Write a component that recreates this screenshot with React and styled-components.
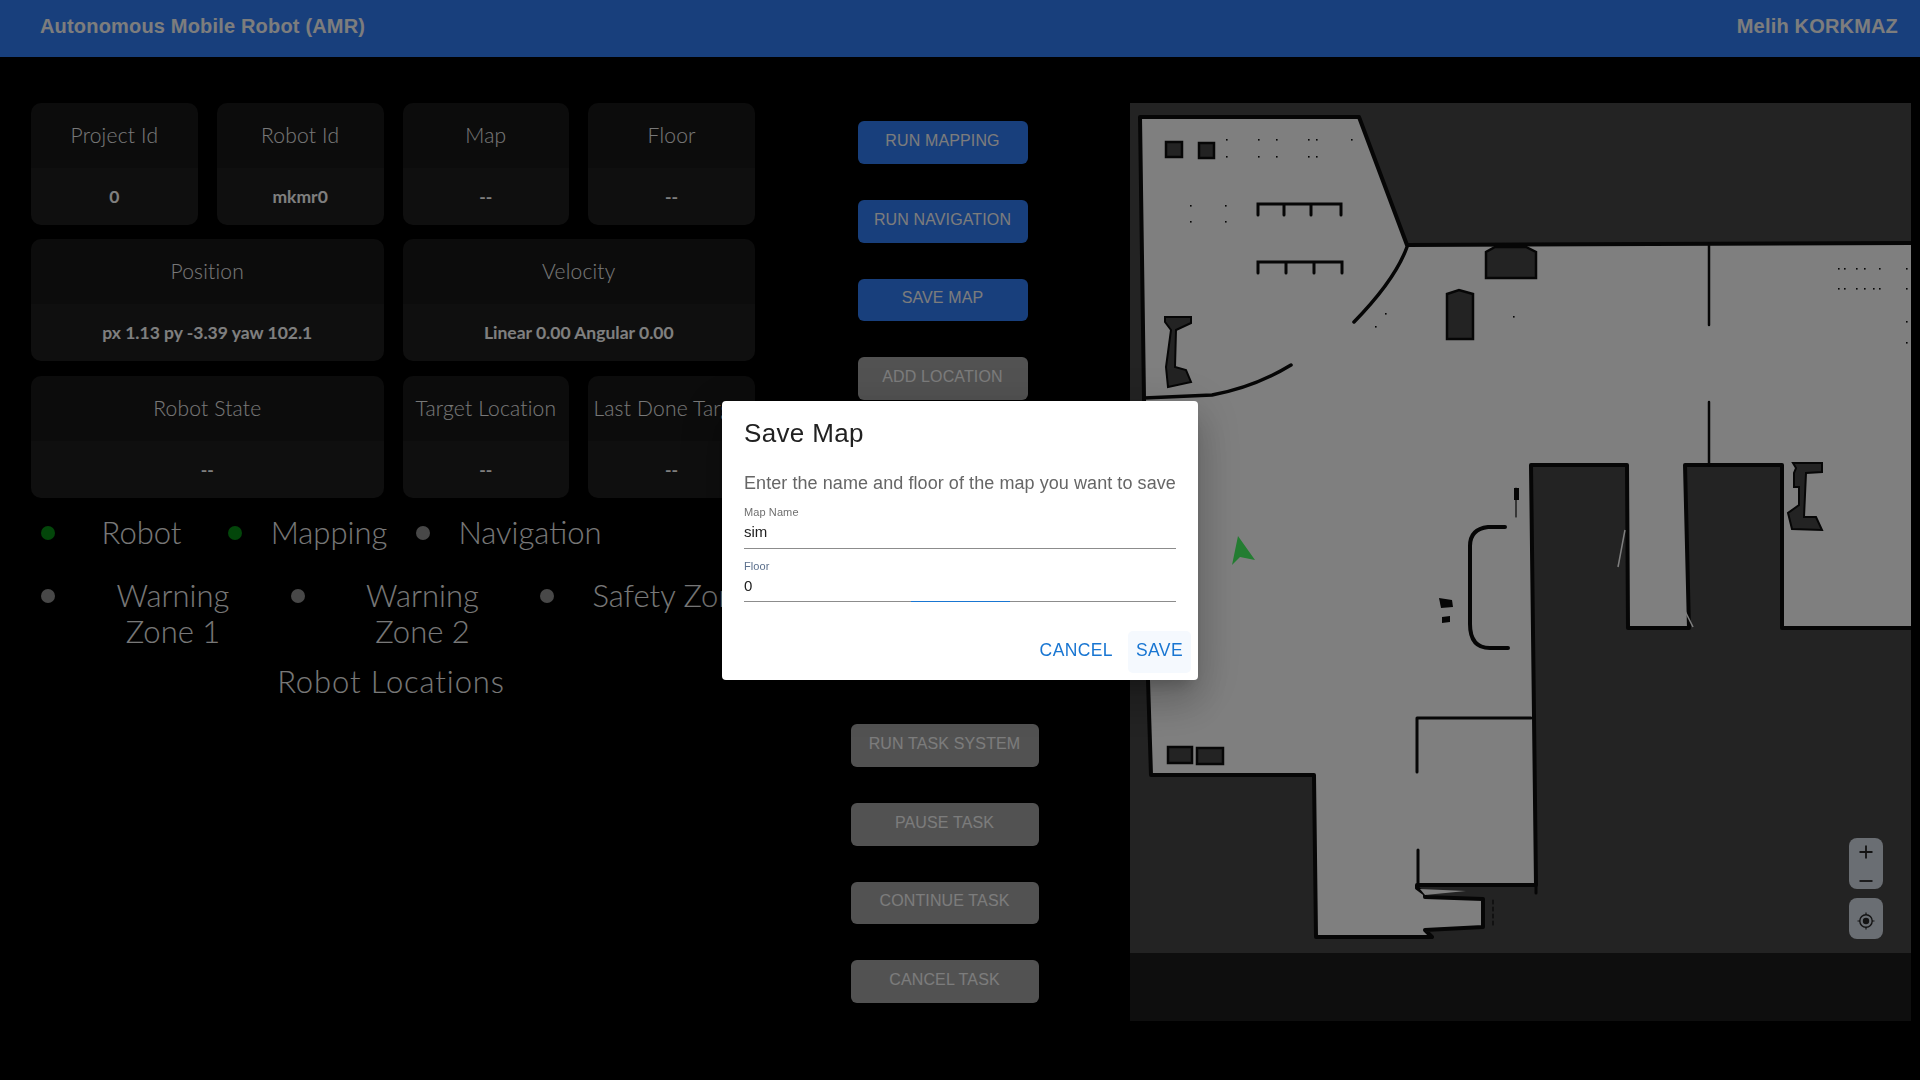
import React from 'react';
import styled, { createGlobalStyle } from 'styled-components';

const GlobalStyle = createGlobalStyle`
    html, body {
        margin: 0;
        height: 100%;
        background: #000;
        font-family: 'Liberation Sans', Arial, sans-serif;
    }
    * { box-sizing: border-box; }
`;

const Page = styled.div`
    width: 1920px;
    height: 1080px;
    overflow: hidden;
    background: #000;
`;

const Header = styled.header`
    height: 57px;
    padding: 14px 22px 0 40px;
    display: flex;
    justify-content: space-between;
    background: #307ef8;
    color: #fafafa;
    font-size: 20px;
    line-height: 24px;
    font-weight: 700;
    letter-spacing: .18px;
`;

const Main = styled.main`
    display: flex;
    padding: 46px 9px 0 31px;
`;

const LeftColumn = styled.section`
    width: 724px;
    flex: none;
`;

const CardGrid = styled.div`
    display: grid;
    grid-template-columns: repeat(4, 1fr);
    grid-auto-rows: 122px;
    column-gap: 19px;
    row-gap: 14.4px;
`;

const Card = styled.div`
    grid-column: span ${(p) => p.$span || 1};
    display: flex;
    flex-direction: column;
    border-radius: 10px;
    overflow: hidden;
    text-align: center;
    white-space: nowrap;
`;

const CardTitle = styled.div`
    height: 65px;
    flex: none;
    padding-top: 17px;
    background: #181818;
    color: #f0f0f0;
    font-family: Lato, sans-serif;
    font-weight: 300;
    font-size: 21px;
    letter-spacing: .2px;
    line-height: 30px;
`;

const CardValue = styled.div`
    flex: 1;
    padding-top: 17px;
    background: #1e1e1e;
    color: #ffffff;
    font-family: Lato, sans-serif;
    font-weight: 700;
    font-size: 17.5px;
    line-height: 24px;
`;

const LegendRow = styled.div`
    display: flex;
    padding-left: 10px;
    margin-top: ${(p) => p.$top}px;
`;

const LegendItem = styled.div`
    width: ${(p) => p.$width}px;
    flex: none;
    display: flex;
`;

const Dot = styled.span`
    width: 14px;
    height: 14px;
    flex: none;
    margin-top: 12px;
    border-radius: 50%;
    background: ${(p) => (p.$on ? '#068c14' : '#909090')};
`;

const LegendText = styled.div`
    flex: 1;
    text-align: center;
    white-space: nowrap;
    color: #f0f0f0;
    font-family: Lato, sans-serif;
    font-weight: 300;
    font-size: 31px;
    line-height: 36px;
`;

const SectionTitle = styled(LegendText)`
    margin-top: 14px;
    padding-right: 4px;
    letter-spacing: .9px;
`;

const Controls = styled.section`
    width: 375px;
    flex: none;
    display: flex;
    flex-direction: column;
    align-items: center;
    padding-top: 18px;
`;

const ButtonGroup = styled.div`
    display: flex;
    flex-direction: column;
    gap: 36px;
    margin-top: ${(p) => p.$top || 0}px;
    margin-left: ${(p) => p.$left || 0}px;
`;

const ActionButton = styled.button`
    width: ${(p) => p.$width}px;
    height: 42.75px;
    padding: 0 0 3px;
    border: 0;
    border-radius: 6px;
    background: ${(p) => (p.$active ? '#307ef8' : '#a5a5a5')};
    color: #f8f8f8;
    font-family: 'Liberation Sans', Arial, sans-serif;
    font-size: 16px;
    letter-spacing: .13px;
    text-transform: uppercase;
`;

const MapPanel = styled.section`
    position: relative;
    width: 781px;
    height: 918px;
    flex: none;
    background: #1c1c1c;
`;

const MapDrawing = styled.svg`
    display: block;
    width: 781px;
    height: 850px;
    background: #464646;
`;

const MapTools = styled.div`
    position: absolute;
    right: 28px;
    bottom: 82px;
    display: flex;
    flex-direction: column;
    gap: 9px;
`;

const ZoomBox = styled.div`
    width: 34px;
    height: 51px;
    padding: 7px 0 1px;
    display: flex;
    flex-direction: column;
    align-items: center;
    gap: 15px;
    border-radius: 8px;
    background: #d4dce6;
`;

const LocateBox = styled.div`
    width: 34px;
    height: 41px;
    padding-top: 5px;
    display: flex;
    align-items: center;
    justify-content: center;
    border-radius: 8px;
    background: #d4dce6;
`;

const Backdrop = styled.div`
    position: fixed;
    inset: 0;
    display: flex;
    align-items: center;
    justify-content: center;
    background: rgba(0, 0, 0, .5);
`;

const Dialog = styled.div`
    width: 476px;
    height: 279px;
    display: flex;
    flex-direction: column;
    padding: 15px 22px 0;
    border-radius: 4px;
    background: #fff;
    box-shadow: 0 11px 15px -7px rgba(0,0,0,.2), 0 24px 38px 3px rgba(0,0,0,.14), 0 9px 46px 8px rgba(0,0,0,.12);
`;

const DialogTitle = styled.h2`
    margin: 0;
    color: #212121;
    font-size: 26px;
    line-height: 34px;
    font-weight: 400;
    letter-spacing: .35px;
`;

const DialogText = styled.p`
    margin: 21px 0 0;
    color: #666;
    font-size: 18px;
    line-height: 24px;
    letter-spacing: .07px;
    white-space: nowrap;
`;

const Field = styled.div`
    position: relative;
    height: ${(p) => p.$height}px;
    margin-top: ${(p) => p.$top}px;
    border-bottom: 1px solid #8c8c8c;
`;

const FieldLabel = styled.div`
    color: ${(p) => p.$color};
    font-size: 11px;
    letter-spacing: .1px;
    line-height: 14px;
`;

const FieldValue = styled.div`
    margin-top: 2px;
    color: #212121;
    font-size: 15px;
    line-height: 22px;
`;

const FocusLine = styled.span`
    position: absolute;
    left: 167px;
    bottom: -1px;
    width: 99px;
    height: 1px;
    background: #1976d2;
`;

const DialogActions = styled.div`
    display: flex;
    justify-content: flex-end;
    margin: 29px -15px 0 0;
`;

const TextButton = styled.div`
    height: 42px;
    padding: 0 ${(p) => p.$pad}px 3px;
    display: flex;
    align-items: center;
    border-radius: 5px;
    background: ${(p) => (p.$hover ? '#f5f9fe' : 'transparent')};
    color: #1976d2;
    font-size: 17.5px;
    letter-spacing: .4px;
`;

const topCards = [
    { title: 'Project Id', value: '0' },
    { title: 'Robot Id', value: 'mkmr0' },
    { title: 'Map', value: '--' },
    { title: 'Floor', value: '--' },
    { title: 'Position', value: 'px 1.13 py -3.39 yaw 102.1', span: 2 },
    { title: 'Velocity', value: 'Linear 0.00 Angular 0.00', span: 2 },
    { title: 'Robot State', value: '--', span: 2 },
    { title: 'Target Location', value: '--' },
    { title: 'Last Done Target', value: '--' }
];

const upperButtons = ['Run Mapping', 'Run Navigation', 'Save Map', 'Add Location'];
const lowerButtons = ['Run Task System', 'Pause Task', 'Continue Task', 'Cancel Task'];

const floorPlan = '1140,117 1359,117 1407,245 1930,243 1930,628 1782,628 1782,465 1685,465 1689,628 1628,628 1627,465 1531,465 1536,885 1417,885 1417,888 1425,894 1425,897 1483,899 1483,927 1425,930 1432,937 1316,937 1314,775 1151,775 1148,680 1144,398';

const specks = [
    [1226, 139], [1258, 139], [1276, 139], [1308, 139], [1316, 139], [1351, 139],
    [1226, 156], [1258, 156], [1276, 156], [1308, 156], [1316, 156],
    [1190, 205], [1225, 205], [1190, 221], [1225, 221],
    [1385, 313], [1375, 326], [1513, 316],
    [1838, 268], [1844, 268], [1856, 268], [1864, 268], [1879, 268], [1906, 268],
    [1838, 288], [1844, 288], [1856, 288], [1864, 288], [1873, 288], [1879, 288], [1906, 288],
    [1906, 321], [1906, 342]
];

const FloorMap = () => (
    <MapDrawing viewBox="1130 103 781 850">
        <polygon points={floorPlan} fill="#fff" stroke="#0c0c0c" strokeWidth="4" strokeLinejoin="round" />
        <polygon points="1420,889 1466,891 1425,895" fill="#fff" />
        <g fill="none" stroke="#0c0c0c" strokeLinecap="round">
            <path strokeWidth="3.5" d="M1407 247Q1395 280 1354 322" />
            <path strokeWidth="3.5" d="M1291 365Q1255 387 1212 395L1144 398" />
            <path strokeWidth="3" d="M1258 215V204H1341V215M1284 204V215M1311 204V215" />
            <path strokeWidth="3" d="M1258 273V262H1342V273M1286 262V273M1314 262V273" />
            <path strokeWidth="2.5" d="M1709 244V325M1709 402V465" />
            <path strokeWidth="4" d="M1505 527H1488Q1470 529 1470 546V624Q1470 648 1490 648H1508" />
            <path strokeWidth="3" d="M1417 718H1531M1417 718V772M1418 850V888M1536 885V893" />
            <path strokeWidth="1.2" strokeDasharray="4 3" d="M1493 900V927" />
            <path strokeWidth="1.2" d="M1516 488V517" />
        </g>
        <g fill="#464646" stroke="#0c0c0c" strokeWidth="2.5">
            <rect x="1166" y="142" width="16" height="15" />
            <rect x="1199" y="143" width="15" height="15" />
            <polygon points="1495,247 1526,247 1536,252 1536,278 1486,278 1486,252" />
            <polygon points="1447,294 1459,290 1473,294 1473,339 1447,339" />
            <rect x="1168" y="747" width="24" height="16" />
            <rect x="1197" y="748" width="26" height="16" />
            <polygon strokeWidth="2" points="1165,317 1191,317 1191,323 1176,330 1175,367 1186,370 1191,382 1168,387 1166,367 1171,330 1165,322" />
            <polygon strokeWidth="2" points="1793,463 1822,463 1822,472 1806,473 1804,517 1816,517 1822,530 1792,529 1788,513 1799,505 1799,487 1794,487 1794,473 1796,468" />
        </g>
        <g fill="#0c0c0c">
            <polygon points="1439,598 1452,600 1453,607 1441,608" />
            <polygon points="1442,617 1450,616 1450,622 1442,623" />
            <rect x="1514" y="488" width="5" height="12" />
            {specks.map(([x, y]) => (
                <rect key={`${x}-${y}`} x={x} y={y} width="1.6" height="1.6" />
            ))}
        </g>
        <g stroke="#fff" strokeWidth="1.5">
            <path d="M1625 530L1618 567" />
            <path d="M1684 609L1693 627" />
        </g>
        <polygon points="1238,536 1255,560 1240,557 1232,565" fill="#48fa64" />
    </MapDrawing>
);

const PlusIcon = () => (
    <svg width="14" height="14" viewBox="0 0 14 14">
        <path d="M7 .5V13.5M.5 7H13.5" stroke="#262626" strokeWidth="1.8" />
    </svg>
);

const MinusIcon = () => (
    <svg width="14" height="14" viewBox="0 0 14 14">
        <path d="M.5 7H13.5" stroke="#262626" strokeWidth="1.8" />
    </svg>
);

const LocateIcon = () => (
    <svg width="18" height="18" viewBox="0 0 18 18">
        <circle cx="9" cy="9" r="6.2" fill="none" stroke="#262626" strokeWidth="1.4" />
        <circle cx="9" cy="9" r="3.2" fill="#262626" />
        <path d="M9 .5V3M9 15V17.5M.5 9H3M15 9H17.5" stroke="#262626" strokeWidth="1.2" />
    </svg>
);

const App = () => (
    <Page>
        <GlobalStyle />
        <Header>
            <span>Autonomous Mobile Robot (AMR)</span>
            <span>Melih KORKMAZ</span>
        </Header>
        <Main>
            <LeftColumn>
                <CardGrid>
                    {topCards.map((card) => (
                        <Card key={card.title} $span={card.span}>
                            <CardTitle>{card.title}</CardTitle>
                            <CardValue>{card.value}</CardValue>
                        </Card>
                    ))}
                </CardGrid>
                <LegendRow $top={16}>
                    <LegendItem $width={187}><Dot $on /><LegendText>Robot</LegendText></LegendItem>
                    <LegendItem $width={188}><Dot $on /><LegendText>Mapping</LegendText></LegendItem>
                    <LegendItem $width={214}><Dot /><LegendText>Navigation</LegendText></LegendItem>
                </LegendRow>
                <LegendRow $top={27}>
                    <LegendItem $width={250}><Dot /><LegendText>Warning<br />Zone 1</LegendText></LegendItem>
                    <LegendItem $width={249}><Dot /><LegendText>Warning<br />Zone 2</LegendText></LegendItem>
                    <LegendItem $width={250}><Dot /><LegendText>Safety Zone</LegendText></LegendItem>
                </LegendRow>
                <SectionTitle>Robot Locations</SectionTitle>
            </LeftColumn>
            <Controls>
                <ButtonGroup>
                    {upperButtons.map((label, i) => (
                        <ActionButton key={label} $width={170} $active={i < 3}>{label}</ActionButton>
                    ))}
                </ButtonGroup>
                <ButtonGroup $top={324} $left={4}>
                    {lowerButtons.map((label) => (
                        <ActionButton key={label} $width={188}>{label}</ActionButton>
                    ))}
                </ButtonGroup>
            </Controls>
            <MapPanel>
                <FloorMap />
                <MapTools>
                    <ZoomBox><PlusIcon /><MinusIcon /></ZoomBox>
                    <LocateBox><LocateIcon /></LocateBox>
                </MapTools>
            </MapPanel>
        </Main>
        <Backdrop>
            <Dialog>
                <DialogTitle>Save Map</DialogTitle>
                <DialogText>Enter the name and floor of the map you want to save</DialogText>
                <Field $top={10} $height={44}>
                    <FieldLabel $color="#6f6f6f">Map Name</FieldLabel>
                    <FieldValue>sim</FieldValue>
                </Field>
                <Field $top={10} $height={43}>
                    <FieldLabel $color="#5b6f8c">Floor</FieldLabel>
                    <FieldValue>0</FieldValue>
                    <FocusLine />
                </Field>
                <DialogActions>
                    <TextButton $pad={15}>CANCEL</TextButton>
                    <TextButton $pad={8} $hover>SAVE</TextButton>
                </DialogActions>
            </Dialog>
        </Backdrop>
    </Page>
);

export default App;
